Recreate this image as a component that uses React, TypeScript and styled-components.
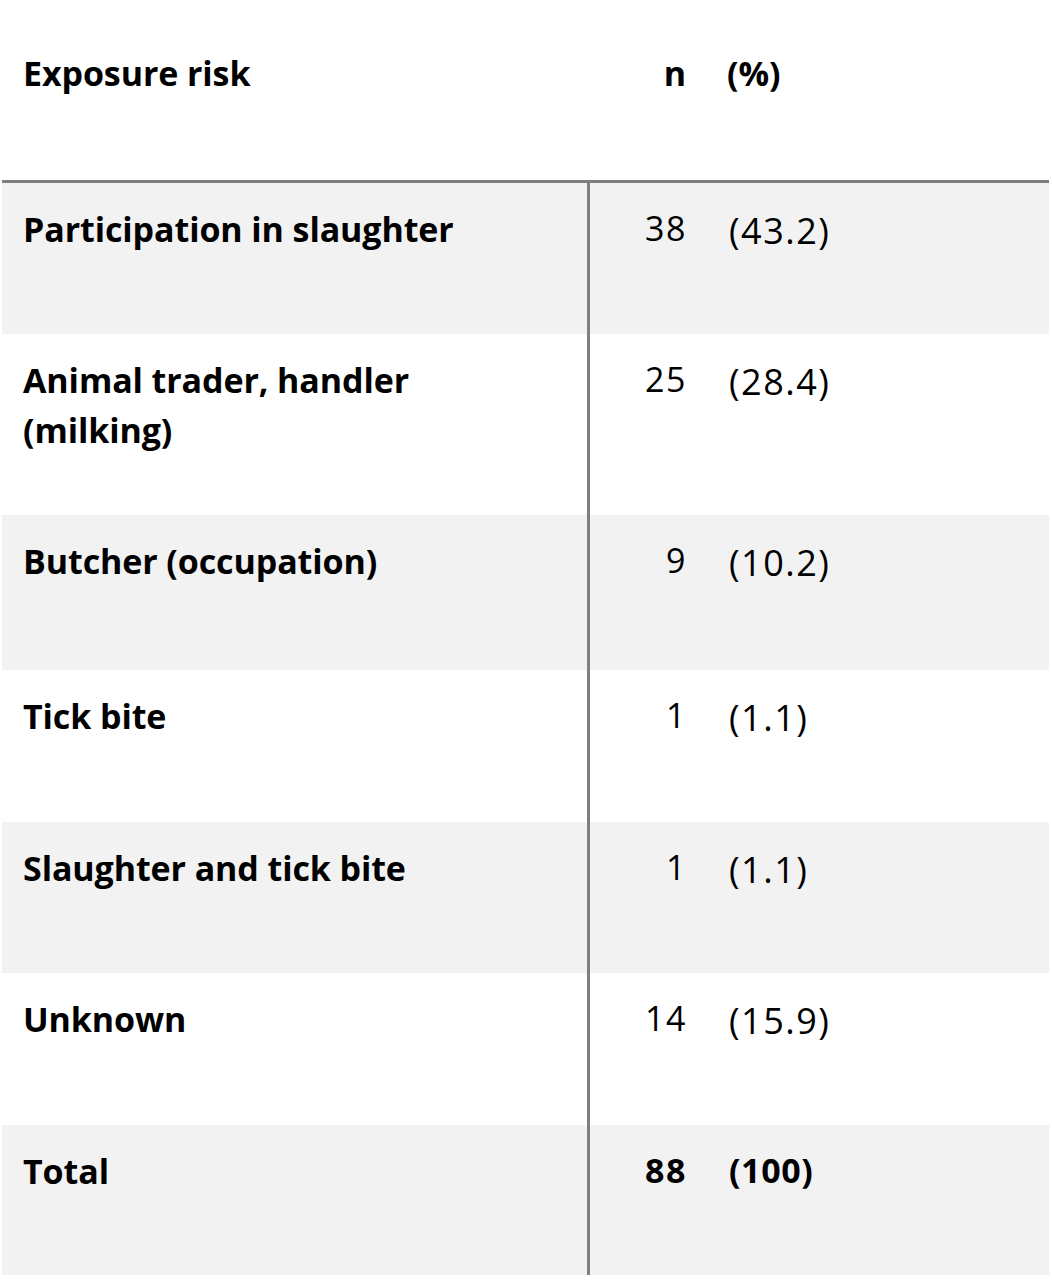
import React from 'react'
import styled, { createGlobalStyle } from 'styled-components'

const Global = createGlobalStyle`
  html, body {
    margin: 0;
    padding: 0;
    background: #fff;
  }
  body {
    font-family: "Open Sans", Lato, "Liberation Sans", sans-serif;
    color: #000;
  }
`

const Table = styled.div`
  margin-left: 2px;
  width: 1047px;
`

const Grid = styled.div`
  display: grid;
  grid-template-columns: 585px 3px 116px 1fr;
`

const Head = styled(Grid)`
  height: 183px;
  box-sizing: border-box;
  padding-top: 50px;
  border-bottom: 3px solid #7f7f7f;
  font-weight: 700;
  font-size: 34px;
  line-height: 46px;
  letter-spacing: -0.1px;
`

const HeadLabel = styled.div<{ $right?: boolean }>`
  padding: ${(p) => (p.$right ? '0 20px 0 0' : '0 0 0 21px')};
  text-align: ${(p) => (p.$right ? 'right' : 'left')};
`

const Row = styled(Grid)<{ $shaded: boolean; $height: number }>`
  height: ${(p) => p.$height}px;
  background: ${(p) => (p.$shaded ? '#f2f2f2' : '#ffffff')};
`

const Rule = styled.div`
  background: #7f7f7f;
`

const Label = styled.div`
  padding: 21px 16px 0 21px;
  font-size: 34px;
  line-height: 50px;
  font-weight: 700;
  letter-spacing: -0.1px;
`

const Count = styled.div<{ $bold?: boolean }>`
  text-align: right;
  padding: 20px 19px 0 0;
  font-size: 34px;
  line-height: 50px;
  font-weight: ${(p) => (p.$bold ? 700 : 400)};
  letter-spacing: 1.5px;
`

const Percent = styled.div<{ $bold?: boolean }>`
  padding: ${(p) => (p.$bold ? '20px' : '23px')} 0 0 23px;
  font-size: ${(p) => (p.$bold ? 34 : 36)}px;
  line-height: 50px;
  font-weight: ${(p) => (p.$bold ? 700 : 400)};
  letter-spacing: ${(p) => (p.$bold ? 0.6 : 1.5)}px;
`

type Item = { label: React.ReactNode; n: string; pct: string; h: number; bold?: boolean }

const rows: Item[] = [
  { label: 'Participation in slaughter', n: '38', pct: '(43.2)', h: 151 },
  { label: <>Animal trader, handler<br />(milking)</>, n: '25', pct: '(28.4)', h: 181 },
  { label: 'Butcher (occupation)', n: '9', pct: '(10.2)', h: 155 },
  { label: 'Tick bite', n: '1', pct: '(1.1)', h: 152 },
  { label: 'Slaughter and tick bite', n: '1', pct: '(1.1)', h: 151 },
  { label: 'Unknown', n: '14', pct: '(15.9)', h: 152 },
  { label: 'Total', n: '88', pct: '(100)', h: 150, bold: true },
]

export default function App() {
  return (
    <>
      <Global />
      <Table>
        <Head>
          <HeadLabel>Exposure risk</HeadLabel>
          <div />
          <HeadLabel $right>n</HeadLabel>
          <HeadLabel>(%)</HeadLabel>
        </Head>
        {rows.map((r, i) => (
          <Row key={r.pct + i} $shaded={i % 2 === 0} $height={r.h}>
            <Label>{r.label}</Label>
            <Rule />
            <Count $bold={r.bold}>{r.n}</Count>
            <Percent $bold={r.bold}>{r.pct}</Percent>
          </Row>
        ))}
      </Table>
    </>
  )
}
